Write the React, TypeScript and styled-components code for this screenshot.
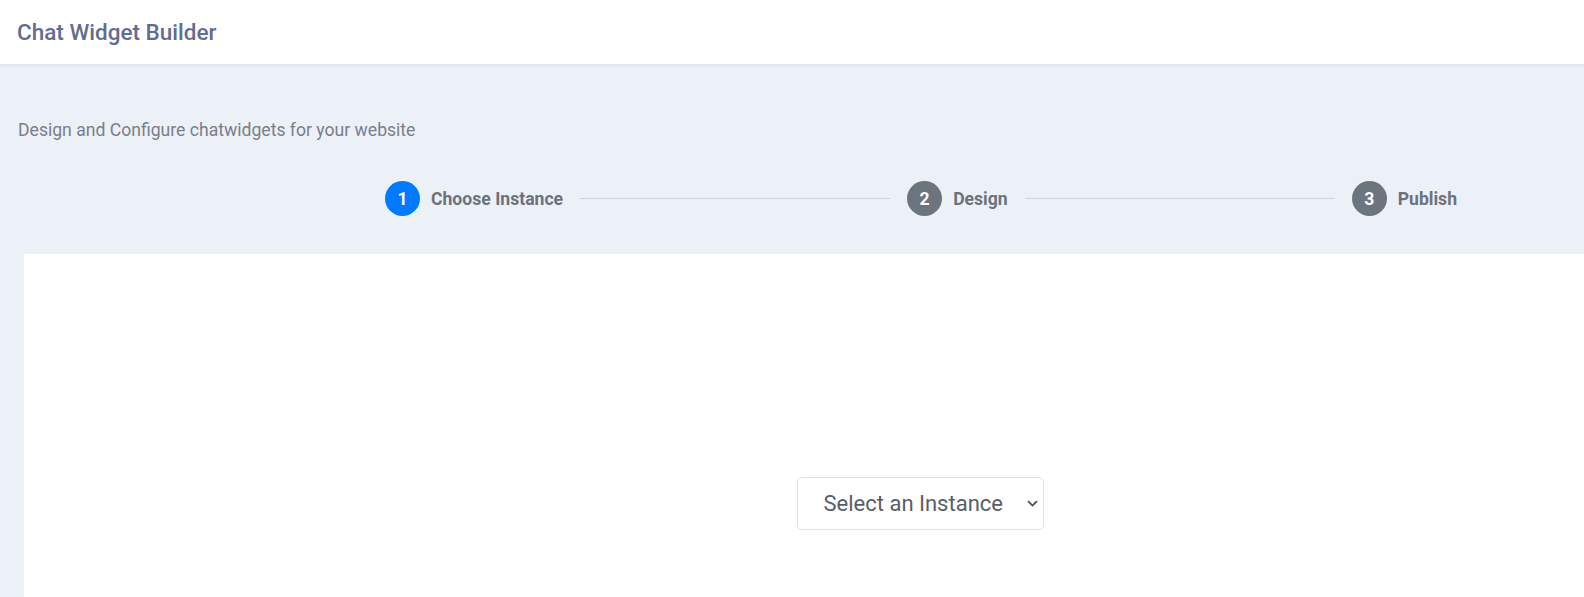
import React from "react";
import styled, { createGlobalStyle } from "styled-components";

const GlobalStyle = createGlobalStyle`
  html, body { margin: 0; padding: 0; overflow: hidden; }
  body {
    background: #ecf0f7;
    font-family: Roboto, "Liberation Sans", Arial, sans-serif;
  }
  * { box-sizing: border-box; }
`;

const Page = styled.div`
  width: 1584px;
  height: 597px;
  overflow: hidden;
  background: #ecf0f7;
`;

const Header = styled.header`
  height: 65px;
  background: #ffffff;
  display: flex;
  align-items: center;
  padding: 0 17px 1px;
  box-shadow: 0 1px 2px rgba(40, 50, 80, 0.07);
  border-bottom: 1px solid #e4e7ee;
`;

const Title = styled.h1`
  margin: 0;
  font-size: 22.5px;
  font-weight: 500;
  color: #616c93;
`;

const Main = styled.main`
  width: 1816px;
  padding-top: 55px;
`;

const Subtitle = styled.p`
  margin: 0 0 0 18px;
  font-size: 17.6px;
  line-height: 21px;
  color: #7a7e8b;
`;

const Stepper = styled.div`
  width: 1072px;
  margin: 40px 0 0 385px;
  display: flex;
  align-items: center;
`;

const Step = styled.div`
  display: flex;
  align-items: center;
  gap: 11px;
`;

const StepCircle = styled.span<{ $active?: boolean }>`
  width: 35px;
  height: 35px;
  border-radius: 50%;
  background: ${(p) => (p.$active ? "#007bff" : "#6c757d")};
  color: #ffffff;
  font-size: 17.6px;
  font-weight: 700;
  display: flex;
  align-items: center;
  justify-content: center;
`;

const StepLabel = styled.span`
  font-size: 17.6px;
  font-weight: 700;
  color: #6c727d;
`;

const Line = styled.div`
  flex: 1;
  height: 1px;
  background: #cdd2db;
  margin: 0 17px;
`;

const Panel = styled.section`
  margin: 38px 0 0 24px;
  height: 400px;
  background: #ffffff;
  display: flex;
  justify-content: center;
  padding-top: 223px;
`;

const SelectWrap = styled.div`
  position: relative;
  height: 53px;
`;

const Select = styled.select`
  appearance: none;
  -webkit-appearance: none;
  width: 247px;
  height: 53px;
  border: 1px solid #dfe3e9;
  border-radius: 5px;
  background: #ffffff;
  font-family: Roboto, "Liberation Sans", Arial, sans-serif;
  font-size: 22px;
  color: #585e69;
  padding: 0 30px 0 26px;
  outline: none;
`;

const Chevron = styled.svg`
  position: absolute;
  right: 6px;
  top: 23px;
  pointer-events: none;
`;

export default function App() {
  return (
    <Page>
      <GlobalStyle />
      <Header>
        <Title>Chat Widget Builder</Title>
      </Header>
      <Main>
        <Subtitle>Design and Configure chatwidgets for your website</Subtitle>
        <Stepper>
          <Step>
            <StepCircle $active>1</StepCircle>
            <StepLabel>Choose Instance</StepLabel>
          </Step>
          <Line />
          <Step>
            <StepCircle>2</StepCircle>
            <StepLabel>Design</StepLabel>
          </Step>
          <Line />
          <Step>
            <StepCircle>3</StepCircle>
            <StepLabel>Publish</StepLabel>
          </Step>
        </Stepper>
        <Panel>
          <SelectWrap>
            <Select defaultValue="">
              <option value="">Select an Instance</option>
            </Select>
            <Chevron width="11" height="7" viewBox="0 0 11 7">
              <path d="M1 1.2 L5.5 5.6 L10 1.2" fill="none" stroke="#4a4f58" strokeWidth="1.8" />
            </Chevron>
          </SelectWrap>
        </Panel>
      </Main>
    </Page>
  );
}
